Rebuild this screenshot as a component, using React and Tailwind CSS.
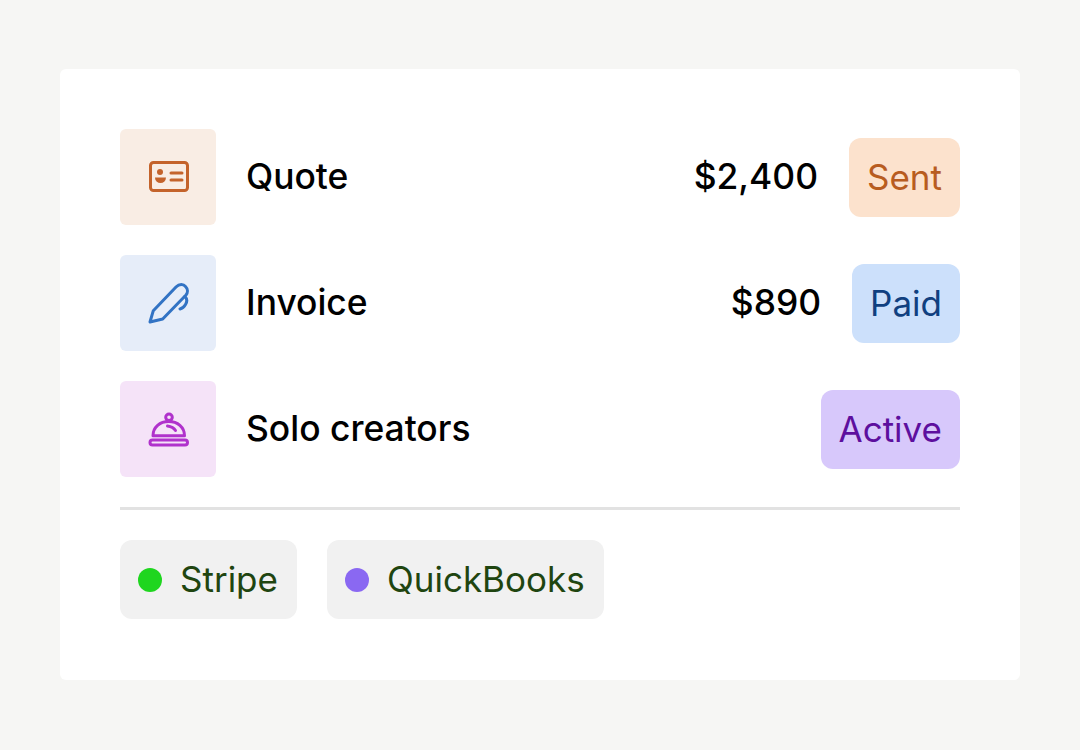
import React from "react";

const IdCardIcon = () => (
  <svg width="42" height="42" viewBox="0 0 42 42" fill="none" stroke="#c4632b" strokeWidth="3" strokeLinecap="round">
    <rect x="3.5" y="6.5" width="37" height="28" rx="3" />
    <circle cx="13" cy="16" r="3" fill="#c4632b" stroke="none" />
    <path d="M8 21.5h11a5.5 5.5 0 0 1-11 0z" fill="#c4632b" stroke="none" />
    <path d="M24 17h11M24 24h11" />
  </svg>
);

const PenIcon = () => (
  <svg width="42" height="42" viewBox="0 0 42 42" fill="none" stroke="#3273c4" strokeWidth="3" strokeLinecap="round" strokeLinejoin="round">
    <path d="M3 40L6.3 28.7L29 5C32.5 1.5 36.5 2 38.5 4.5C41 7 41 10.5 39 13L15.7 37Z" />
    <path d="M38 14.5C40.5 17 40 20 38.5 22.5C37 25 35 26.5 33 27" />
  </svg>
);

const BellIcon = () => (
  <svg width="42" height="42" viewBox="0 0 42 42" fill="none" stroke="#b032cc" strokeWidth="3" strokeLinecap="round" strokeLinejoin="round">
    <circle cx="22" cy="9.3" r="3.3" />
    <path d="M6 27.7C6 19 13 13.5 21.7 13.5C30.5 13.5 37.5 19 37.5 27.7Z" />
    <path d="M20.5 18C24 18.5 27 20 28.5 22.5" />
    <rect x="3" y="32" width="37.5" height="5" rx="2.5" />
  </svg>
);

const rows = [
  { label: "Quote", amount: "$2,400", badge: "Sent", tile: "bg-[#f9ede4]", badgeClass: "bg-[#fce2cd] text-[#b85c1f]", Icon: IdCardIcon },
  { label: "Invoice", amount: "$890", badge: "Paid", tile: "bg-[#e6edf9]", badgeClass: "bg-[#cce0fb] text-[#104080]", Icon: PenIcon },
  { label: "Solo creators", badge: "Active", tile: "bg-[#f5e3f8]", badgeClass: "bg-[#d7c8fb] text-[#5d0f9e]", Icon: BellIcon },
];

const integrations = [
  { name: "Stripe", dot: "bg-[#1fd61f]" },
  { name: "QuickBooks", dot: "bg-[#8a68f2]" },
];

export default function App() {
  return (
    <div className="min-h-[750px] bg-[#f6f6f4] px-[60px] pt-[69px] font-['Inter',sans-serif]">
      <div className="rounded-[6px] bg-white px-[60px] pt-[60px] pb-[61px]">
        <div className="flex flex-col gap-[30px] border-b-[3px] border-[#e2e2e2] pb-[30px]">
          {rows.map(({ label, amount, badge, tile, badgeClass, Icon }) => (
            <div key={label} className="flex h-[96px] items-center">
              <div className={`flex h-[96px] w-[96px] items-center justify-center rounded-[6px] ${tile}`}>
                <Icon />
              </div>
              <span className="ml-[30px] text-[35.4px] leading-none font-medium text-black">{label}</span>
              <div className="ml-auto flex items-center gap-[31px]">
                {amount && <span className="text-[35.4px] leading-none font-medium text-black">{amount}</span>}
                <span className={`flex h-[79px] items-center rounded-[12px] px-[18px] text-[35px] leading-none ${badgeClass}`}>
                  {badge}
                </span>
              </div>
            </div>
          ))}
        </div>
        <div className="mt-[30px] flex gap-[30px]">
          {integrations.map(({ name, dot }) => (
            <div key={name} className="flex h-[79px] items-center gap-[18px] rounded-[12px] bg-[#f1f1f1] pl-[18px] pr-[19px]">
              <span className={`h-6 w-6 rounded-full ${dot}`} />
              <span className="text-[35px] leading-none text-[#1f4510]">{name}</span>
            </div>
          ))}
        </div>
      </div>
    </div>
  );
}
